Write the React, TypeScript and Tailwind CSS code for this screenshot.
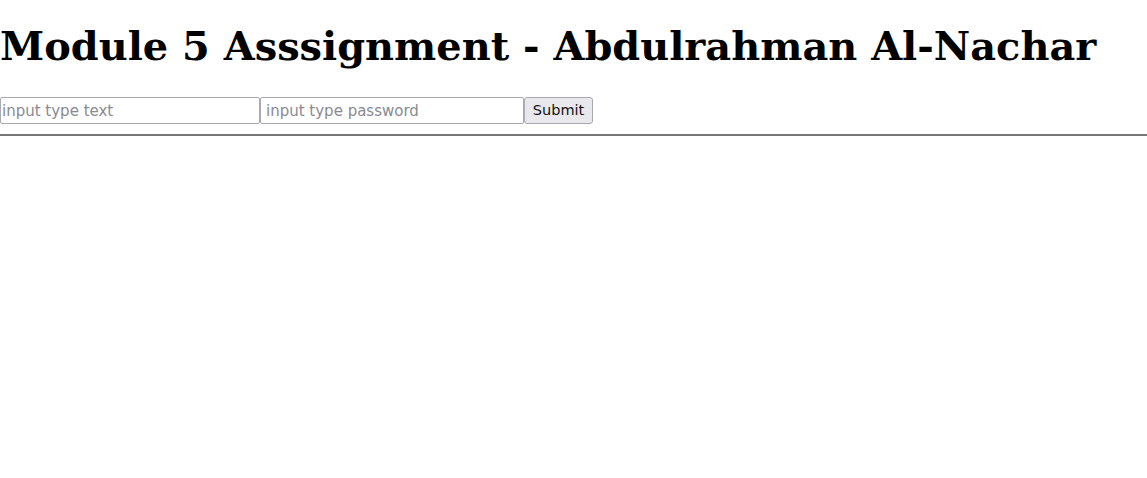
export default function App() {
  return (
    <div className="min-h-screen bg-white">
      <h1 className="pt-[23px] pb-[28px] font-['DejaVu_Serif',serif] text-[39.9px] font-bold leading-[46px] text-black">
        Module 5 Asssignment - Abdulrahman Al-Nachar
      </h1>
      <form className="flex items-center" onSubmit={(e) => e.preventDefault()}>
        <input
          type="text"
          autoFocus
          placeholder="input type text"
          className="h-[27px] w-[260px] rounded-[2px] border border-[#a9a9b4] bg-white px-[1px] font-['DejaVu_Sans',sans-serif] text-[15px] text-black outline-none placeholder:text-[#8a8a92]"
        />
        <input
          type="password"
          placeholder="input type password"
          className="h-[27px] w-[264px] rounded-[2px] border border-[#a9a9b4] bg-white px-[5px] font-['DejaVu_Sans',sans-serif] text-[15px] text-black outline-none placeholder:text-[#8a8a92]"
        />
        <button
          type="submit"
          className="h-[27px] w-[69px] rounded-[3px] border border-[#a9a9b4] bg-[#e9e9ed] font-['DejaVu_Sans',sans-serif] text-[14.5px] text-[#111]"
        >
          Submit
        </button>
      </form>
      <hr className="mt-[10px] border-t-2 border-[#777777]" />
    </div>
  )
}
